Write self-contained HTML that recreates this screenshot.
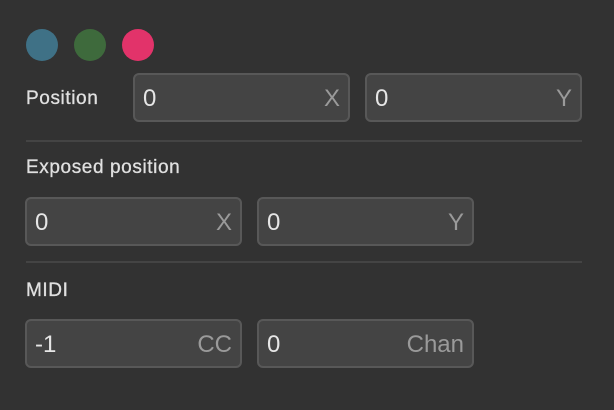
<!DOCTYPE html>
<html><head><style>
body{margin:0;width:614px;height:410px;background:#323232;font-family:"Liberation Sans",sans-serif;position:relative;overflow:hidden}
.c{position:absolute;width:32px;height:32px;border-radius:50%;top:29px}
.in{position:absolute;box-sizing:border-box;background:#444;border:2px solid #585858;border-radius:6px;height:49px;width:217px}
.v{position:absolute;left:8px;top:10px;font-size:24px;color:#e6e6e6}
.u{position:absolute;right:8px;top:10px;font-size:24px;color:#9a9a9a}
.l{position:absolute;left:26px;font-size:19px;color:#e0e0e0;letter-spacing:0.6px;-webkit-text-stroke:0.3px #e0e0e0}
.sep{position:absolute;left:26px;width:556px;height:2px;background:#444}
</style></head><body>
<div class="c" style="left:26px;background:#3f7186"></div>
<div class="c" style="left:74px;background:#3e6a3c"></div>
<div class="c" style="left:122px;background:#e2336a"></div>
<div class="l" style="top:88px">Position</div>
<div class="in" style="left:133px;top:73px"><span class="v">0</span><span class="u">X</span></div>
<div class="in" style="left:365px;top:73px"><span class="v">0</span><span class="u">Y</span></div>
<div class="sep" style="top:140px"></div>
<div class="l" style="top:157px">Exposed position</div>
<div class="in" style="left:25px;top:197px"><span class="v">0</span><span class="u">X</span></div>
<div class="in" style="left:257px;top:197px"><span class="v">0</span><span class="u">Y</span></div>
<div class="sep" style="top:261px"></div>
<div class="l" style="top:280px">MIDI</div>
<div class="in" style="left:25px;top:319px"><span class="v">-1</span><span class="u">CC</span></div>
<div class="in" style="left:257px;top:319px"><span class="v">0</span><span class="u">Chan</span></div>
</body></html>
